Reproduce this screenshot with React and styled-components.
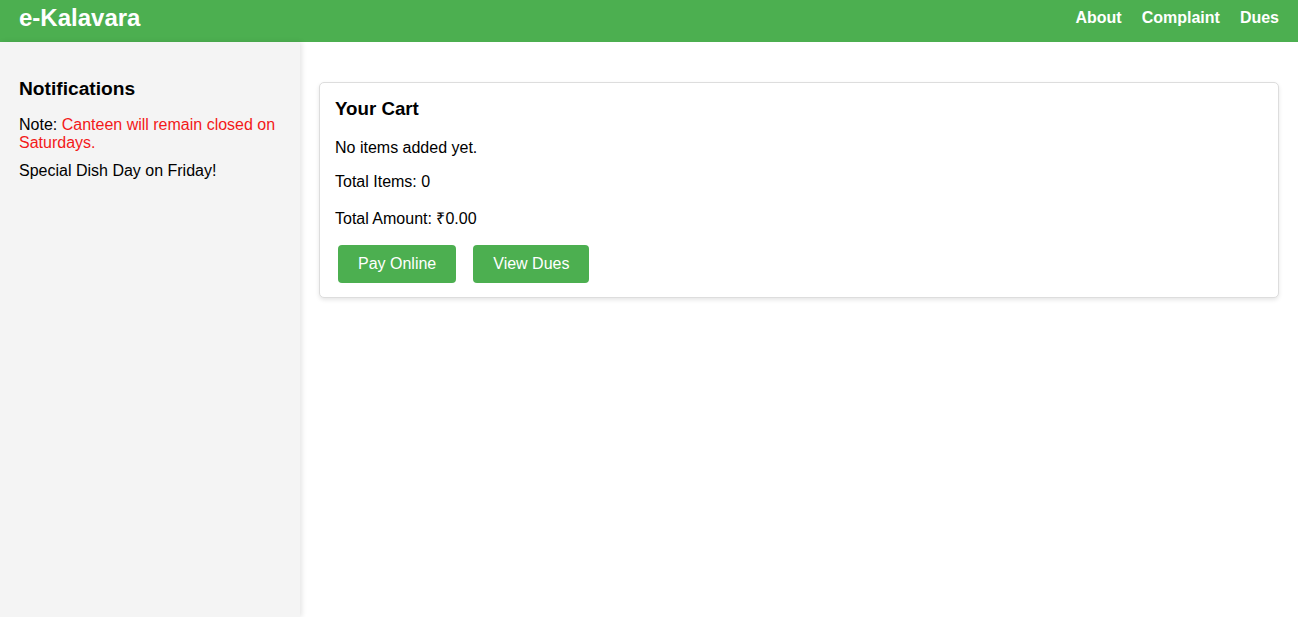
import styled, { createGlobalStyle } from 'styled-components'

const GlobalStyle = createGlobalStyle`
  * {
    box-sizing: border-box;
  }

  body {
    margin: 0;
    font-family: "Liberation Sans", Arial, sans-serif;
    color: #000;
    background: #fff;
  }
`

const Header = styled.header`
  height: 42px;
  padding: 0 19px 7px 19px;
  background: #4caf50;
  color: #fff;
  display: flex;
  align-items: center;
  justify-content: space-between;
`

const Logo = styled.h1`
  margin: 0;
  font-size: 24px;
  font-weight: bold;
`

const Nav = styled.nav`
  display: flex;
  gap: 20px;
`

const NavLink = styled.a`
  color: #fff;
  font-size: 16px;
  font-weight: bold;
  text-decoration: none;
`

const Layout = styled.div`
  display: flex;
  min-height: calc(100vh - 42px);
`

const Sidebar = styled.aside`
  width: 300px;
  flex-shrink: 0;
  padding: 20px 19px;
  background: #f4f4f4;
  box-shadow: 2px 0 5px rgba(0, 0, 0, 0.1);
`

const SideTitle = styled.h3`
  margin: 15.5px 0 16px;
  font-size: 19.2px;
`

const Notice = styled.p`
  margin: 0 0 10px;
  font-size: 16px;
  line-height: 18.4px;
`

const Alert = styled.span`
  color: #f31919;
`

const Main = styled.main`
  flex: 1;
  padding: 40px 19px 20px 19px;
`

const Card = styled.section`
  border: 1px solid #ddd;
  border-radius: 5px;
  padding: 15px 15px 14px;
  background: #fff;
  box-shadow: 0 2px 4px rgba(0, 0, 0, 0.1);
`

const CardTitle = styled.h3`
  margin: 0 0 19px;
  font-size: 18.72px;
`

const Line = styled.p`
  margin: 0 0 ${p => p.$gap || 16}px;
  font-size: 16px;
  line-height: 18.4px;
`

const Actions = styled.div`
  display: flex;
  gap: 17px;
  padding-left: 3px;
`

const Button = styled.button`
  border: none;
  border-radius: 4px;
  padding: 10px 20px;
  background: #4caf50;
  color: #fff;
  font-family: inherit;
  font-size: 16px;
  line-height: 18px;
  cursor: pointer;
`

export default function App() {
  return (
    <>
      <GlobalStyle />
      <Header>
        <Logo>e-Kalavara</Logo>
        <Nav>
          <NavLink href="#">About</NavLink>
          <NavLink href="#">Complaint</NavLink>
          <NavLink href="#">Dues</NavLink>
        </Nav>
      </Header>
      <Layout>
        <Sidebar>
          <SideTitle>Notifications</SideTitle>
          <Notice>
            Note: <Alert>Canteen will remain closed on Saturdays.</Alert>
          </Notice>
          <Notice>Special Dish Day on Friday!</Notice>
        </Sidebar>
        <Main>
          <Card>
            <CardTitle>Your Cart</CardTitle>
            <Line>No items added yet.</Line>
            <Line $gap={18}>Total Items: 0</Line>
            <Line $gap={17}>Total Amount: ₹0.00</Line>
            <Actions>
              <Button>Pay Online</Button>
              <Button>View Dues</Button>
            </Actions>
          </Card>
        </Main>
      </Layout>
    </>
  )
}
